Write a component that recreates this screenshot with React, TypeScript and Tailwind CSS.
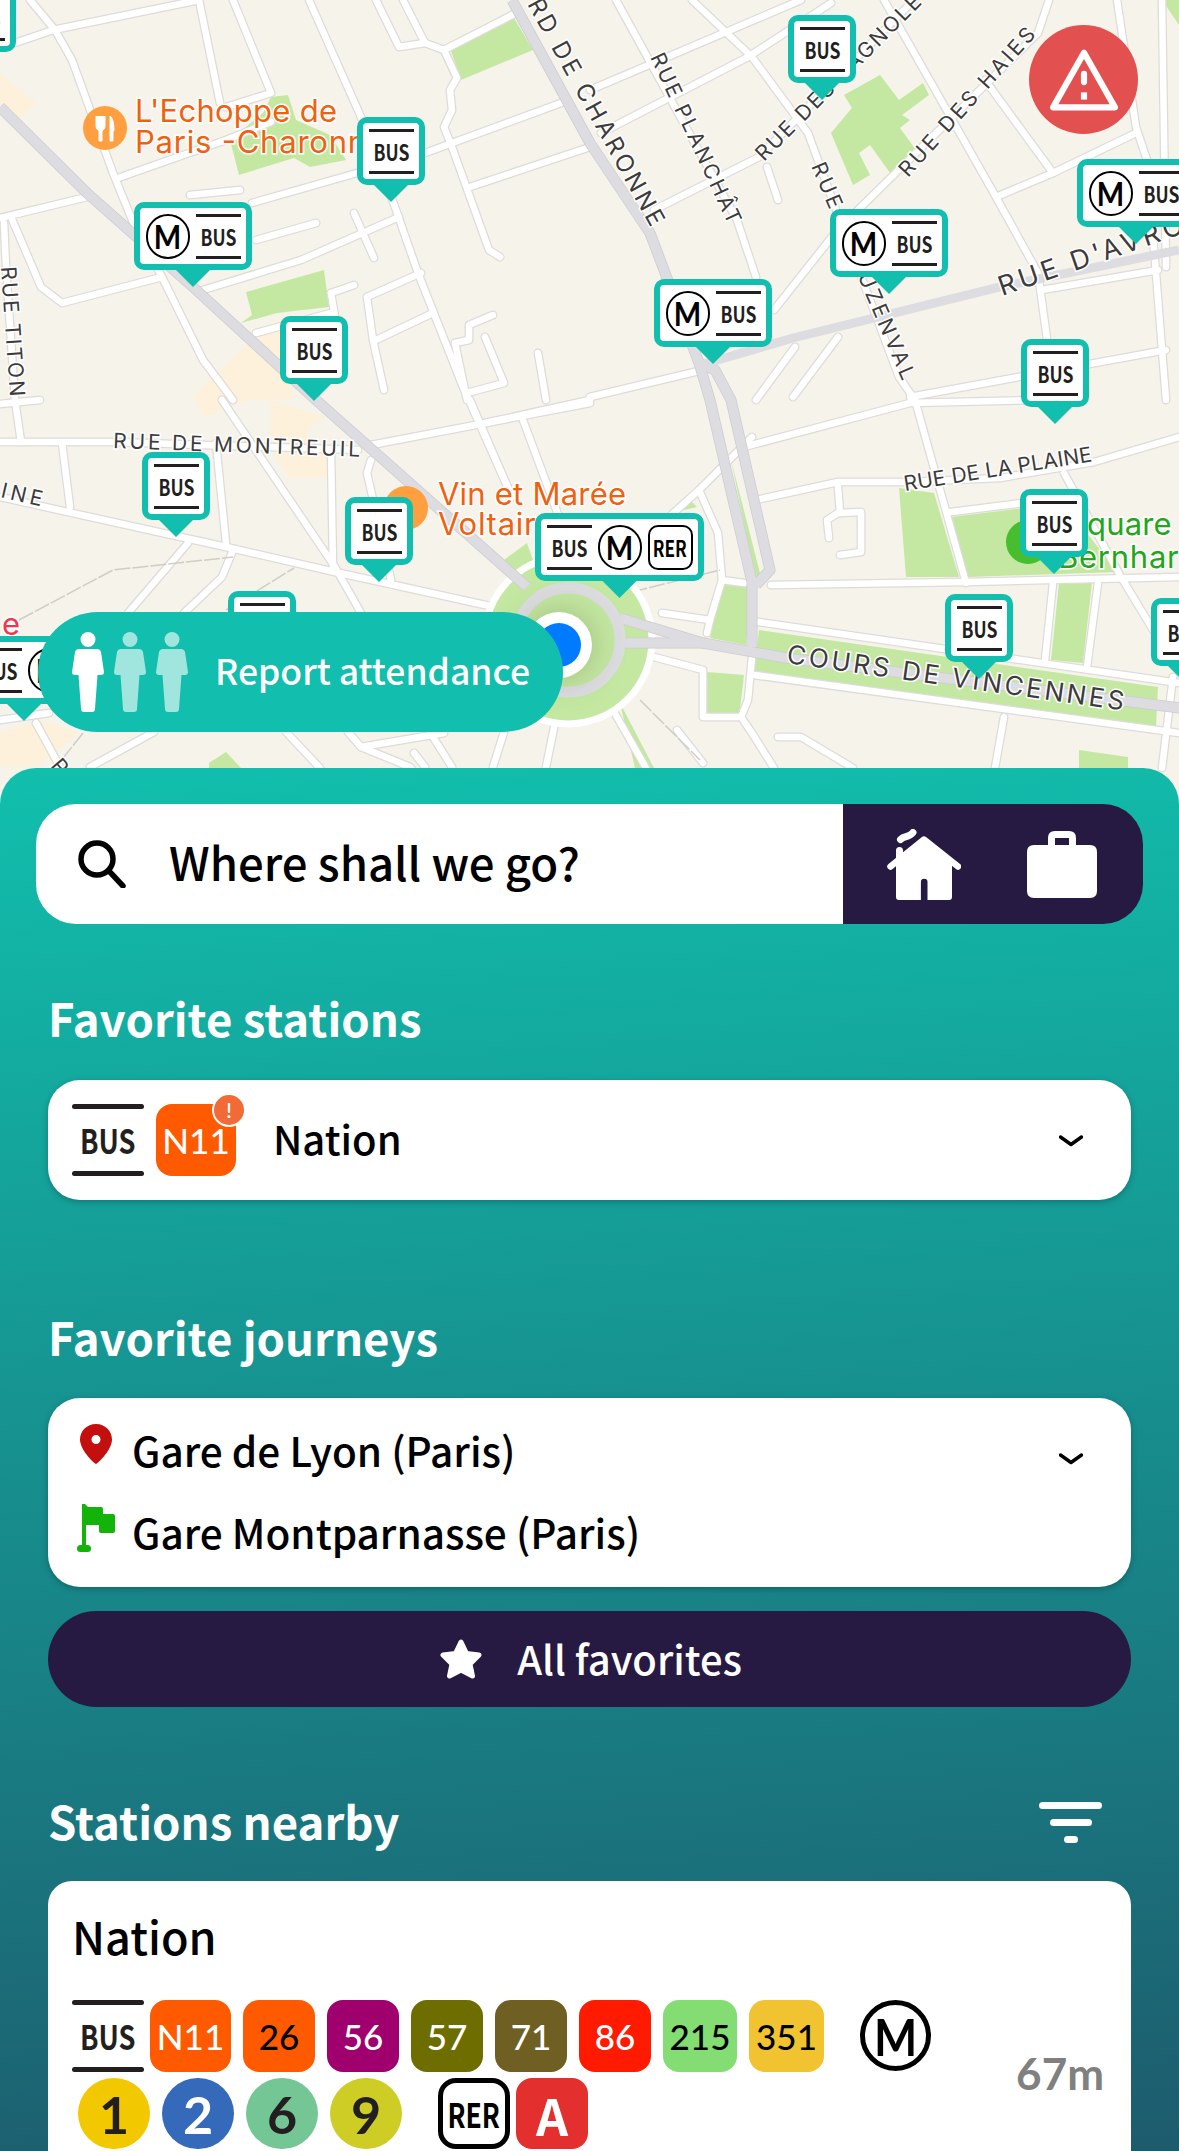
const parks = [
  '514,18 533,50 461,80 450,48',
  '271,97 288,95 296,120 330,135 346,160 310,167 294,158 239,175 230,140 263,113',
  '246,292 324,270 329,307 277,313 241,323 252,315',
  '880,75 899,100 923,83 929,95 902,115 910,120 900,128 916,150 893,177 870,145 859,153 870,175 853,185 831,133 852,108 844,95',
  '899,488 934,493 959,577 906,577',
  '951,517 1023,508 1087,533 1117,572 968,577',
  '1059,583 1092,582 1083,663 1051,660',
  '722,583 752,587 746,645 710,638',
  '707,672 744,675 739,717 705,713',
  '1079,750 1128,757 1128,804 1079,804',
  '690,500 697,507 671,513',
  '731,460 761,577 755,577',
  '759,630 1158,687 1156,727 754,673',
  '209,763 226,752 241,768 241,804 209,804',
  '620,703 654,768 654,804 635,768',
  '1162,0 1179,0 1179,25',
  '500,563 527,543 540,580 527,587',
]

const beige = [
  '0,73 36,103 19,120 0,103',
  '192,397 245,347 278,317 293,400 271,400 248,400 205,417',
  '271,400 324,417 305,433 325,453 327,477 290,478 271,450',
  '0,733 41,720 79,733 38,767 0,767',
]

const roads = [
  '15,43 53,30 199,0', '30,0 55,30 72,60 113,173 135,227 162,277 203,360 233,400',
  '199,0 220,103', '233,0 271,93 226,107', '118,178 226,140 271,122',
  '252,203 357,173 425,153 561,103', '470,187 590,147', '0,218 87,197', '190,195 240,190',
  '256,240 316,223', '203,290 301,260 399,217', '354,213 374,258',
  '361,117 395,207 418,273 463,387 512,497', '309,0 361,117', '376,0 399,47 425,43',
  '403,0 425,43 444,50 516,13', '444,50 457,78 450,90 452,110 444,127 452,147 489,250 500,257',
  '11,217 41,287 62,303 162,277', '4,223 6,267 15,400 21,442', '367,297 421,273',
  '367,297 373,340 384,390', '376,340 433,313', '331,293 354,285', '331,293 335,317',
  '256,333 331,313', '538,353 546,400', '493,315 469,325 469,340 455,343',
  '455,343 467,400', '485,337 504,383 467,393', '616,0 737,220 756,277',
  '692,0 752,57 808,133 835,207 899,377 915,400 966,583', '590,90 801,0', '601,133 748,57 831,3',
  '654,210 759,157 914,0', '861,207 1038,33 1049,0', '861,207 835,233 774,310',
  '884,0 962,137 996,197 1038,273 1047,339', '985,80 1053,173', '996,197 1053,173 1136,133',
  '1117,0 1136,127 1147,160 1166,400', '767,167 778,200', '1042,290 1158,270', '1162,0 1166,267',
  '838,337 793,397', '795,347 756,400', '910,397 1166,350', '590,397 703,370',
  '0,442 113,442 358,450', '371,445 590,403', '0,497 226,547 335,572 508,610',
  '62,443 70,507', '216,443 226,543', '222,400 335,567 361,613', '331,450 333,567',
  '371,460 367,473 391,580', '188,543 128,613', '233,550 222,577 184,613',
  '470,400 512,497', '485,423 590,400', '523,420 565,533', '36,723 60,767 75,804', '0,720 49,713',
  '90,767 154,732', '286,732 320,768 340,804', '348,732 361,747 410,767 440,804', '361,747 444,733',
  '414,753 425,767', '433,737 452,767', '493,767 504,732', '546,767 557,713',
  '744,447 910,403 1040,400', '756,500 838,482 906,482 1000,478 1094,462 1179,437',
  '838,487 840,513', '838,513 827,520 829,538', '840,513 861,512 861,552 840,555',
  '951,512 1023,503', '771,585 966,582 1179,577', '1064,473 1121,577 1155,633', '1053,583 1045,660',
  '1098,583 1087,667', '752,657 748,700 741,717 752,733 774,768', '778,737 801,737 853,768',
  '741,717 703,717 703,670 654,657', '1004,717 995,768', '1173,677 1162,768',
  '752,437 699,490 658,527', '699,490 718,533 722,580 744,583', '722,580 710,620 662,613',
  '710,620 707,633', '613,710 646,768', '677,730 703,763', '759,622 1179,683', '754,675 1179,733',
  '0,404 40,400',
]

const majors = [
  '0,107 87,193 193,287 316,400 527,587',
  '512,0 590,143 650,233 699,363 710,400 752,582 752,647',
  '699,363 715,370 731,400 770,570 756,585',
  '620,618 703,643 786,658 1180,708',
  '620,643 703,643',
]

const rails = ['19,620 113,570 233,557', '226,610 294,568', '83,733 56,767', '640,700 700,760', '560,600 640,590 720,570']

type Kind = 'bus' | 'metro' | 'rer'

const pins: { x: number; y: number; kinds: Kind[] }[] = [
  { x: -52, y: -16, kinds: ['bus'] },
  { x: 357, y: 117, kinds: ['bus'] },
  { x: 280, y: 316, kinds: ['bus'] },
  { x: 788, y: 15, kinds: ['bus'] },
  { x: 1021, y: 339, kinds: ['bus'] },
  { x: 142, y: 452, kinds: ['bus'] },
  { x: 345, y: 497, kinds: ['bus'] },
  { x: 228, y: 591, kinds: ['bus'] },
  { x: 1020, y: 489, kinds: ['bus'] },
  { x: 945, y: 594, kinds: ['bus'] },
  { x: 1151, y: 598, kinds: ['bus'] },
  { x: -35, y: 636, kinds: ['bus', 'metro'] },
  { x: 134, y: 202, kinds: ['metro', 'bus'] },
  { x: 830, y: 209, kinds: ['metro', 'bus'] },
  { x: 654, y: 279, kinds: ['metro', 'bus'] },
  { x: 1077, y: 159, kinds: ['metro', 'bus'] },
  { x: 535, y: 513, kinds: ['bus', 'metro', 'rer'] },
]

const streetLabels = [
  { t: 'RUE TITON', x: 1, y: 267, r: 86, s: 21, w: 130 },
  { t: 'RD DE CHARONNE', x: 527, y: 4, r: 61, s: 24, w: 256 },
  { t: 'RUE PLANCHÂT', x: 650, y: 57, r: 65, s: 21, w: 186 },
  { t: 'RUE DES BAGNOLET', x: 764, y: 162, r: -45, s: 21, w: 240 },
  { t: 'RUE DES HAIES', x: 908, y: 178, r: -48, s: 21, w: 192 },
  { t: 'RUE DE BUZENVAL', x: 811, y: 166, r: 67, s: 21, w: 234 },
  { t: "RUE D'AVRON", x: 1002, y: 296, r: -19, s: 27, w: 218 },
  { t: 'RUE DE MONTREUIL', x: 113, y: 448, r: 2, s: 21, w: 247 },
  { t: 'INE', x: 0, y: 497, r: 13, s: 21, w: 42 },
  { t: 'RUE DE LA PLAINE', x: 905, y: 491, r: -9, s: 21, w: 190 },
  { t: 'COURS DE VINCENNES', x: 786, y: 663, r: 8, s: 26, w: 340 },
  { t: 'R', x: 50, y: 766, r: 50, s: 21, w: 14 },
]

const poiLabels = [
  { t: "L'Echoppe de", x: 135, y: 122, c: '#f0600f', w: 202 },
  { t: 'Paris -Charonne', x: 135, y: 153, c: '#f0600f', w: 250 },
  { t: 'Vin et Marée', x: 438, y: 505, c: '#f0600f', w: 188 },
  { t: 'Voltaire', x: 438, y: 535, c: '#f0600f', w: 116 },
  { t: 'quare St', x: 1087, y: 535, c: '#22a61a', w: 124 },
  { t: 'Bernhard', x: 1058, y: 568, c: '#22a61a', w: 140 },
  { t: 'e', x: 2, y: 635, c: '#ef3850', w: 17 },
]

function MapDrawing() {
  return (
    <svg viewBox="0 0 1179 804" className="absolute inset-0 w-[1179px] h-[804px]">
      {beige.map((p) => <polygon key={p} points={p} fill="#fdf1dc" />)}
      {parks.map((p) => <polygon key={p} points={p} fill="#c4e8a2" />)}
      {roads.map((p) => (
        <polyline key={p} points={p} fill="none" stroke="#dedcda" strokeWidth="9" strokeLinejoin="round" strokeLinecap="round" />
      ))}
      {roads.map((p) => (
        <polyline key={p + 'w'} points={p} fill="none" stroke="#ffffff" strokeWidth="6.5" strokeLinejoin="round" strokeLinecap="round" />
      ))}
      {rails.map((p) => (
        <polyline key={p} points={p} fill="none" stroke="#cfcdc6" strokeWidth="1.5" strokeDasharray="16 2" />
      ))}
      <circle cx="568" cy="640" r="84" fill="#c4e8a2" stroke="#ffffff" strokeWidth="7" />
      {majors.map((p) => (
        <polyline key={p} points={p} fill="none" stroke="#ccccd1" strokeWidth="11" strokeLinejoin="round" />
      ))}
      {majors.map((p) => (
        <polyline key={p + 'g'} points={p} fill="none" stroke="#dddde1" strokeWidth="9.500" strokeLinejoin="round" />
      ))}
      <polyline points="704,364 793,338 1000,287 1179,250" fill="none" stroke="#dddde1" strokeWidth="9" />
      <circle cx="568" cy="640" r="52" fill="#c4e8a2" stroke="#dddde1" strokeWidth="11" />
      <ellipse cx="105" cy="128" rx="22" ry="22" fill="#ff9f3f" />
      <path d="M96 116v10c0 3 2 4 3 5v10h3v-10c1-1 3-2 3-5v-10M99 116v8M102 116v8M110 116c3 2 4 8 4 14l-1 2v9h-3z" fill="#ffffff" stroke="#ffffff" strokeWidth="1" />
      <circle cx="406" cy="508" r="22" fill="#ff9f3f" />
      <circle cx="1028" cy="542" r="22" fill="#46be2f" />
      {streetLabels.map((l) => (
        <text
          key={l.t}
          x={l.x}
          y={l.y}
          transform={`rotate(${l.r} ${l.x} ${l.y})`}
          fontFamily="Inter, sans-serif"
          fontSize={l.s}
          textLength={l.w}
          lengthAdjust="spacing"
          fill="#3d3b3b"
          stroke="#ffffff"
          strokeWidth="3"
          paintOrder="stroke"
        >
          {l.t}
        </text>
      ))}
      {poiLabels.map((l) => (
        <text
          key={l.t}
          x={l.x}
          y={l.y}
          fontFamily="Inter, sans-serif"
          fontSize="31"
          textLength={l.w}
          lengthAdjust="spacing"
          fill={l.c}
          stroke="#ffffff"
          strokeWidth="3"
          paintOrder="stroke"
        >
          {l.t}
        </text>
      ))}
    </svg>
  )
}

function BusMark({ small }: { small?: boolean }) {
  if (small) {
    return (
      <div className="w-[45px] h-[45px] shrink-0 flex flex-col justify-between items-center">
        <div className="h-[3px] w-full bg-[#231f20]" />
        <span className="text-[22px] leading-none font-bold text-[#231f20] scale-x-[.8]">BUS</span>
        <div className="h-[3px] w-full bg-[#231f20]" />
      </div>
    )
  }
  return (
    <div className="w-[72px] h-[72px] shrink-0 flex flex-col justify-between items-center">
      <div className="h-[5px] w-full rounded-full bg-[#231f20]" />
      <span className="text-[34px] leading-none font-bold text-[#231f20] scale-x-[.8]">BUS</span>
      <div className="h-[5px] w-full rounded-full bg-[#231f20]" />
    </div>
  )
}

function PinItem({ kind }: { kind: Kind }) {
  if (kind === 'bus') return <BusMark small />
  if (kind === 'metro') {
    return (
      <div className="w-[44px] h-[45px] shrink-0 rounded-full border-[2.5px] border-black flex items-center justify-center">
        <span className="font-['Lato',sans-serif] text-[33px] leading-none font-bold text-black scale-x-[.88]">M</span>
      </div>
    )
  }
  return (
    <div className="w-[45px] h-[45px] shrink-0 rounded-[10px] border-[2.5px] border-black flex items-center justify-center">
      <span className="text-[22px] leading-none font-bold text-black scale-x-[.78]">RER</span>
    </div>
  )
}

function MapPin({ x, y, kinds }: { x: number; y: number; kinds: Kind[] }) {
  return (
    <div className="absolute flex flex-col items-center" style={{ left: x, top: y }}>
      <div className="h-[68px] flex items-center gap-[6px] px-[5.5px] bg-white border-[6px] border-[#12bead] rounded-[10px]">
        {kinds.map((k) => <PinItem key={k} kind={k} />)}
      </div>
      <div className="w-[36px] h-[18px] -mt-px bg-[#12bead] [clip-path:polygon(0_0,100%_0,50%_100%)]" />
    </div>
  )
}

function Person({ faded }: { faded?: boolean }) {
  return (
    <svg viewBox="0 0 32 80" className={faded ? 'w-[32px] h-[80px] fill-[#a0e5de]' : 'w-[32px] h-[80px] fill-white'}>
      <circle cx="16" cy="7.5" r="7.5" />
      <path d="M7 17H25q3 0 4 3L32 40q0 3-3 3H25.5L23 77q0 3-3 3H12q-3 0-3-3L6.5 43H3q-3 0-3-3L3 20q1-3 4-3Z" />
    </svg>
  )
}

function Chevron() {
  return (
    <svg viewBox="0 0 24 14" className="w-[24px] h-[14px]">
      <polyline points="1.5,2 12,9.5 22.5,2" fill="none" stroke="#000" strokeWidth="3.4" strokeLinecap="round" strokeLinejoin="round" />
    </svg>
  )
}

function Heading({ children }: { children: string }) {
  return <h2 className="h-[60px] pb-[5px] flex items-center text-[45.5px] font-bold text-white leading-none">{children}</h2>
}

const busLines = [
  { n: 'N11', bg: 'bg-[#ff5a00]', fg: 'text-white', w: 'w-[81px] ml-[-6px]' },
  { n: '26', bg: 'bg-[#ff5a00]', fg: 'text-black', w: 'w-[72px]' },
  { n: '56', bg: 'bg-[#a0006e]', fg: 'text-white', w: 'w-[72px]' },
  { n: '57', bg: 'bg-[#6e6e00]', fg: 'text-white', w: 'w-[72px]' },
  { n: '71', bg: 'bg-[#705f22]', fg: 'text-white', w: 'w-[72px]' },
  { n: '86', bg: 'bg-[#ff1a00]', fg: 'text-white', w: 'w-[72px]' },
  { n: '215', bg: 'bg-[#83dd72]', fg: 'text-black', w: 'w-[74px]' },
  { n: '351', bg: 'bg-[#f2c331]', fg: 'text-black', w: 'w-[75px]' },
]

const metroLines = [
  { n: '1', bg: 'bg-[#f2c900]', fg: 'text-[#231f20]' },
  { n: '2', bg: 'bg-[#356abb]', fg: 'text-white' },
  { n: '6', bg: 'bg-[#75c695]', fg: 'text-[#231f20]' },
  { n: '9', bg: 'bg-[#cdcd26]', fg: 'text-[#231f20]' },
]

export default function App() {
  return (
    <div className="relative w-[1179px] h-[2151px] overflow-hidden bg-[#f6f3eb] font-['Noto_Sans_CJK_SC','Noto_Sans',sans-serif]">
      <div className="relative h-[804px] -mb-[36px] overflow-hidden">
        <MapDrawing />
        <div className="absolute left-[526px] top-[612px] w-[66px] h-[66px] rounded-full bg-white flex items-center justify-center shadow-[0_0_36px_rgba(70,80,40,.3)]">
          <div className="w-[44px] h-[44px] rounded-full bg-[#007aff]" />
        </div>
        {pins.map((p) => <MapPin key={`${p.x}-${p.y}`} {...p} />)}

        <div className="absolute left-[38px] top-[612px] w-[525px] h-[120px] rounded-full bg-[#12bead] flex items-center pl-[34px]">
          <div className="flex gap-[10px]">
            <Person />
            <Person faded />
            <Person faded />
          </div>
          <span className="ml-[27px] pb-[5px] text-[35.5px] font-medium leading-none text-white">Report attendance</span>
        </div>

        <div className="absolute left-[1029px] top-[25px] w-[109px] h-[109px] rounded-full bg-[#e35050] flex items-center justify-center">
          <svg viewBox="0 0 66 60" className="w-[68px] h-[62px]">
            <path d="M33 3.5 63 56.5H3Z" fill="none" stroke="#fff" strokeWidth="6" strokeLinejoin="round" />
            <rect x="30" y="21" width="6" height="14" rx="3" fill="#fff" />
            <rect x="30" y="42" width="6" height="7" fill="#fff" />
          </svg>
        </div>
      </div>

      <div className="relative rounded-t-[36px] h-[1383px] pt-[36px] px-[36px] bg-[linear-gradient(176deg,#11bfad,#1d5b6d)]">
        <div className="flex h-[120px] rounded-[40px] overflow-hidden">
          <div className="flex-1 flex items-center bg-white pl-[42px]">
            <svg viewBox="0 0 48 48" className="w-[48px] h-[48px]">
              <circle cx="19" cy="19" r="16" fill="none" stroke="#000" strokeWidth="5.500" />
              <line x1="31" y1="31" x2="45" y2="46" stroke="#000" strokeWidth="5.500" strokeLinecap="round" />
            </svg>
            <span className="ml-[43px] pb-[5px] text-[45.5px] font-medium text-black leading-none">Where shall we go?</span>
          </div>
          <div className="w-[300px] bg-[#271a42] flex items-center pl-[44px] gap-[66px]">
            <svg viewBox="0 0 74 71" className="w-[74px] h-[71px] fill-white">
              <path d="M37 8 65 30V68q0 3-3 3H40.5V53a3.3 3.3 0 0 0-6.6 0V71H12q-3 0-3-3V30Z" />
              <rect x="9" y="18" width="7" height="20" rx="3.5" />
              <path d="M3.5 37.5 37 10.5 71 37.5" fill="none" stroke="#fff" strokeWidth="6.5" strokeLinecap="round" strokeLinejoin="round" />
              <path d="M13.5 10.5C18 6 22 9 26 3.5" fill="none" stroke="#fff" strokeWidth="7" strokeLinecap="round" />
            </svg>
            <svg viewBox="0 0 70 67" className="w-[70px] h-[67px] fill-white">
              <path fillRule="evenodd" d="M21 14V7q0-7 7-7H42q7 0 7 7V14H63q7 0 7 7V60q0 7-7 7H7q-7 0-7-7V21q0-7 7-7ZM28 7V14H42V7Z" />
            </svg>
          </div>
        </div>

        <div className="px-[12px]">
          <div className="mt-[66px]"><Heading>Favorite stations</Heading></div>
          <div className="mt-[30px] h-[120px] rounded-[32px] bg-white shadow-[0_2px_6px_rgba(0,0,0,.25)] flex items-center pl-[24px] pr-[48px]">
            <BusMark />
            <div className="relative ml-[12px] w-[80px] h-[72px] rounded-[16px] bg-[#ff5a00] flex items-center justify-center font-['Lato',sans-serif] font-medium text-[35px] leading-none text-white">
              N11
              <div className="absolute -top-[11px] -right-[10px] w-[34px] h-[34px] rounded-full bg-[#f26a35] border-2 border-white flex items-center justify-center text-[22px] leading-none">!</div>
            </div>
            <span className="ml-[37px] pb-[4px] flex-1 text-[40px] font-medium text-black leading-none">Nation</span>
            <div className="pt-[4px]"><Chevron /></div>
          </div>

          <div className="mt-[109px]"><Heading>Favorite journeys</Heading></div>
          <div className="mt-[29px] h-[189px] rounded-[32px] bg-white shadow-[0_2px_6px_rgba(0,0,0,.25)] relative flex flex-col justify-center pl-[29px] pb-[3px] gap-[30px]">
            <div className="flex items-center h-[52px]">
              <div className="w-[55px] shrink-0 pl-[3px] -mt-[13px]">
                <svg viewBox="0 0 32 40" className="w-[32px] h-[40px]">
                  <path fillRule="evenodd" d="M16 0C7 0 0 7 0 15.500C0 24 10 36 16 40C22 36 32 24 32 15.500C32 7 25 0 16 0ZM16 11A4.500 4.500 0 1 1 16 20A4.500 4.500 0 1 1 16 11Z" fill="#c40f0f" />
                </svg>
              </div>
              <span className="text-[40.5px] font-medium text-black leading-none">Gare de Lyon (Paris)</span>
            </div>
            <div className="flex items-center h-[52px]">
              <div className="w-[55px] shrink-0 -mt-[8px]">
                <svg viewBox="0 0 38 48" className="w-[38px] h-[48px] fill-[#14b30a]">
                  <path d="M5 0h3l3 3H24q2 0 2 2v5h10q2 0 2 2V27q0 2-2 2H24q-2 0-2-2V21H9V42h-4Z" />
                  <rect x="0" y="41" width="14" height="7" rx="3.500" />
                </svg>
              </div>
              <span className="text-[40.5px] font-medium text-black leading-none">Gare Montparnasse (Paris)</span>
            </div>
            <div className="absolute right-[48px] top-[55px]"><Chevron /></div>
          </div>

          <div className="mt-[24px] h-[96px] rounded-full bg-[#271a42] flex items-center justify-center gap-[35px] pl-[3px]">
            <svg viewBox="0 0 42 40" className="w-[42px] h-[40px]">
              <polygon points="21,3 26.500,14.500 39,16 30,25 32.500,37 21,31 9.500,37 12,25 3,16 15.500,14.500" fill="#fff" stroke="#fff" strokeWidth="5" strokeLinejoin="round" />
            </svg>
            <span className="pb-[2px] text-[40px] font-medium text-white leading-none">All favorites</span>
          </div>

          <div className="mt-[86px] flex items-center justify-between pr-[29px]">
            <Heading>Stations nearby</Heading>
            <div className="flex flex-col items-center gap-[10px] -mt-[2px]">
              <div className="w-[63px] h-[7px] rounded-full bg-white" />
              <div className="w-[42px] h-[7px] rounded-full bg-white" />
              <div className="w-[14px] h-[7px] rounded-full bg-white" />
            </div>
          </div>

          <div className="mt-[28px] rounded-[24px] bg-white pl-[24px] pr-[27px] pt-[25px] pb-[40px]">
            <div className="text-[45px] font-medium text-black leading-[60px]">Nation</div>
            <div className="mt-[34px] flex items-center justify-between">
              <div className="flex flex-col gap-[6px]">
                <div className="flex gap-[12px]">
                  <BusMark />
                  {busLines.map((l) => (
                    <div key={l.n} className={`${l.w} h-[72px] rounded-[16px] ${l.bg} ${l.fg} flex items-center justify-center font-['Lato',sans-serif] font-medium text-[35px] leading-none`}>
                      {l.n}
                    </div>
                  ))}
                  <div className="ml-[24px] w-[71px] h-[71px] rounded-full border-[5px] border-black flex items-center justify-center">
                    <span className="font-['Lato',sans-serif] text-[52px] leading-none font-bold text-black scale-x-[.88]">M</span>
                  </div>
                </div>
                <div className="flex gap-[12px] pl-[6px]">
                  {metroLines.map((l) => (
                    <div key={l.n} className={`w-[72px] h-[71px] rounded-full ${l.bg} ${l.fg} flex items-center justify-center font-['Lato',sans-serif] font-bold text-[52px] leading-none`}>
                      {l.n}
                    </div>
                  ))}
                  <div className="ml-[24px] w-[72px] h-[71px] rounded-[18px] border-[5px] border-black flex items-center justify-center">
                    <span className="text-[34px] leading-none font-bold text-black scale-x-[.78]">RER</span>
                  </div>
                  <div className="-ml-[6px] w-[72px] h-[71px] rounded-[16px] bg-[#e3302f] flex items-center justify-center text-white text-[50px] font-bold leading-none">A</div>
                </div>
              </div>
              <span className="pb-[3px] font-['Lato',sans-serif] font-bold text-[44px] leading-none text-[#808080]">67m</span>
            </div>
          </div>
        </div>
      </div>
    </div>
  )
}
